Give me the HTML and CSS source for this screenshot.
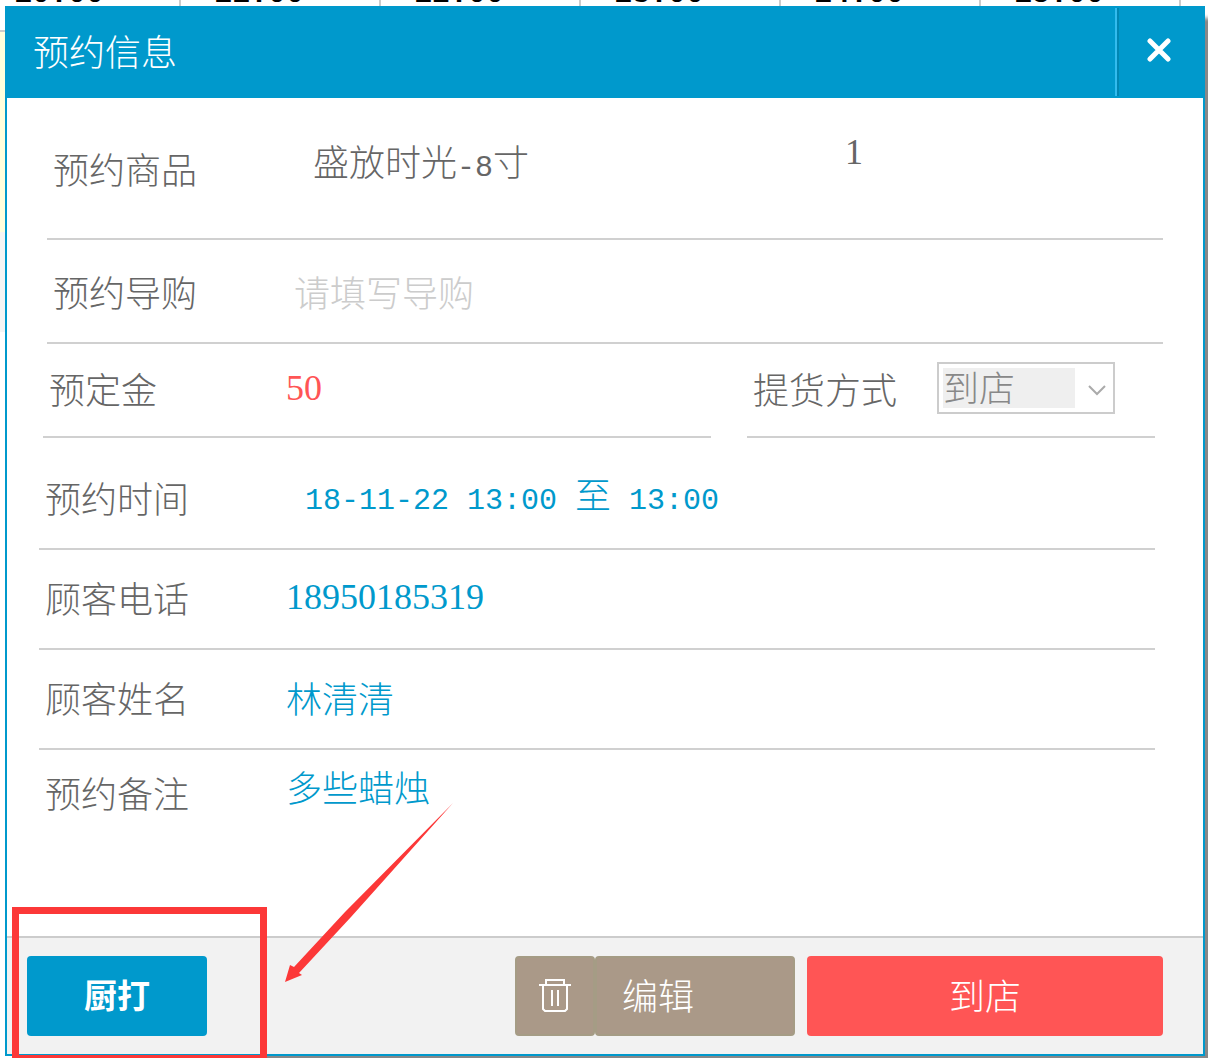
FILE: index.html
```
<!DOCTYPE html>
<html lang="zh-CN">
<head>
    <meta charset="UTF-8">
    <meta name="viewport" content="width=device-width, initial-scale=1.0">
    <title>预约信息</title>
    <link rel="stylesheet" href="styles.css">
</head>
<body>
    <!-- Schedule behind the dialog -->
    <div class="calendar">
        <div class="calendar-head">
            <span>10:00</span>
            <span>11:00</span>
            <span>12:00</span>
            <span>13:00</span>
            <span>14:00</span>
            <span>15:00</span>
        </div>
        <div class="calendar-slot busy"></div>
        <div class="calendar-slot"></div>
    </div>

    <div class="dialog" role="dialog" aria-labelledby="dialogTitle">
        <div class="dialog-header">
            <h1 id="dialogTitle">预约信息</h1>
            <button type="button" class="close-btn" aria-label="关闭">
                <svg width="24" height="24" viewBox="0 0 24 24">
                    <path d="M3 3L21 21M21 3L3 21" fill="none" stroke="#fff" stroke-width="5" stroke-linecap="round"/>
                </svg>
            </button>
        </div>

        <form>
            <div class="section-top">
                <div class="row row-goods">
                    <span class="label">预约商品</span>
                    <span class="goods-name">盛放时光<span class="mono">-8</span>寸</span>
                    <span class="goods-count num">1</span>
                </div>
                <div class="row row-guide">
                    <label class="label" for="guide">预约导购</label>
                    <input type="text" id="guide" placeholder="请填写导购">
                </div>
            </div>

            <div class="section-deposit">
                <div class="row row-deposit">
                    <label class="label" for="deposit">预定金</label>
                    <input type="text" id="deposit" class="num red" value="50">
                </div>
                <div class="row row-pickup">
                    <label class="label" for="pickup">提货方式</label>
                    <div class="select-box">
                        <select id="pickup">
                            <option>到店</option>
                        </select>
                        <svg class="arrow" width="18" height="12" viewBox="0 0 18 12">
                            <path d="M1 2L9 10L17 2" fill="none" stroke="#aaa" stroke-width="2"/>
                        </svg>
                    </div>
                </div>
            </div>

            <div class="section-customer">
                <div class="row row-time">
                    <span class="label">预约时间</span>
                    <span class="time"><span class="mono">18-11-22 13:00 </span>至<span class="mono"> 13:00</span></span>
                </div>
                <div class="row">
                    <label class="label" for="phone">顾客电话</label>
                    <input type="text" id="phone" class="num" value="18950185319">
                </div>
                <div class="row">
                    <label class="label" for="customer">顾客姓名</label>
                    <input type="text" id="customer" value="林清清">
                </div>
                <div class="row row-remark">
                    <label class="label" for="remark">预约备注</label>
                    <textarea id="remark">多些蜡烛</textarea>
                </div>
            </div>
        </form>

        <div class="dialog-footer">
            <button type="button" class="btn btn-print">厨打</button>
            <div class="btn-group">
                <button type="button" class="btn btn-delete" aria-label="删除">
                    <svg width="32" height="34" viewBox="0 0 32 34">
                        <path d="M0 6H32M7 6V1H25V6M4 6V30L6 32H26L28 30V6M13 11V27M19 11V27" fill="none" stroke="#fff" stroke-width="2"/>
                    </svg>
                </button>
                <button type="button" class="btn btn-edit">编辑</button>
            </div>
            <button type="button" class="btn btn-arrive">到店</button>

            <div class="mark-box"></div>
            <svg class="mark-arrow" width="168" height="180" viewBox="0 0 168 180">
                <path d="M0 179L5 162L9 164L60 109L168 0L66 114L14 170L17 172Z" fill="#fc3838"/>
            </svg>
        </div>
    </div>
</body>
</html>
```
FILE: styles.css
```
* {
    box-sizing: border-box;
}
body {
    margin: 0;
    min-height: 100vh;
    overflow: hidden;
    position: relative;
    background: #fff;
    color: #666;
    font-family: "Noto Sans CJK SC", sans-serif;
    font-size: 36px;
    font-weight: 300;
    line-height: 36px;
}
button, input, select, textarea {
    margin: 0;
    padding: 0;
    border: none;
    border-radius: 0;
    background: none;
    color: inherit;
    font: inherit;
}
.num {
    font-family: "Liberation Serif", serif;
}
.mono {
    font-family: "Liberation Mono", monospace;
    font-size: 30px;
    white-space: pre;
}

/* schedule */
.calendar {
    margin-top: -24px;
}
.calendar-head {
    display: flex;
    height: 56px;
    margin-left: -19px;
    border-bottom: 2px solid #ccc;
    color: #000;
    font-family: "Liberation Mono", monospace;
    font-size: 30px;
    font-weight: bold;
}
.calendar-head span {
    flex: 0 0 200px;
    padding-left: 33px;
    border-right: 2px solid #ccc;
}
.calendar-slot {
    height: 100px;
    background: #f5f5f5;
}
.calendar-slot.busy {
    height: 200px;
    background: #ffffdd;
}

/* dialog */
.dialog {
    position: absolute;
    top: 6px;
    left: 5px;
    right: 3px;
    border: 2px solid #0099cc;
    background: #fff;
    box-shadow: 12px 12px 4px #888;
}
.dialog-header {
    display: flex;
    justify-content: space-between;
    height: 90px;
    padding-left: 26px;
    background: #0099cc;
    color: #fff;
}
.dialog-header h1 {
    margin: 0;
    font-size: 36px;
    font-weight: 300;
    line-height: 84px;
}
.close-btn {
    display: flex;
    align-items: center;
    justify-content: center;
    width: 88px;
    height: 88px;
    padding: 0 2px 4px 0;
    border-left: 2px solid #33bbee;
    box-shadow: inset 2px 0 #0086b3;
}

/* form rows */
.section-top {
    padding: 0 40px;
}
.section-deposit {
    display: flex;
    gap: 36px;
    padding: 0 48px 0 36px;
}
.section-customer {
    padding: 0 48px 0 32px;
}
.row {
    display: flex;
    align-items: center;
    height: 100px;
    padding: 0 0 4px 6px;
    border-bottom: 2px solid #d0d0d0;
}
.label {
    flex: 0 0 240px;
}
.row input,
.row textarea {
    flex: 1;
    min-width: 0;
    height: 48px;
    padding: 0 1px;
    color: #0099cc;
    outline: none;
}
.row input::placeholder {
    color: #ccc;
    opacity: 1;
}
.row input.red {
    color: #ff5555;
}
.row-goods {
    align-items: flex-start;
    height: 142px;
    padding-top: 34px;
}
.row-goods .label {
    line-height: 72px;
}
.goods-name {
    flex: 1;
    padding-left: 20px;
    line-height: 56px;
}
.goods-count {
    width: 318px;
    line-height: 40px;
}
.row-guide {
    height: 104px;
    padding-top: 4px;
}
.row-deposit {
    flex: 1;
    min-width: 0;
    height: 94px;
}
.row-deposit .label {
    flex-basis: 236px;
}
.row-pickup {
    flex: 0 0 408px;
    height: 94px;
}
.row-pickup .label {
    flex-basis: 184px;
}
.select-box {
    position: relative;
    width: 178px;
    height: 52px;
    padding: 4px;
    border: 2px solid #ccc;
}
.select-box select {
    display: block;
    appearance: none;
    width: 132px;
    height: 40px;
    padding-bottom: 4px;
    background: #efefef;
    color: #888;
}
.select-box .arrow {
    position: absolute;
    top: 20px;
    right: 7px;
    pointer-events: none;
}
.row-time {
    height: 112px;
    padding-top: 12px;
}
.time {
    padding-left: 20px;
    color: #0099cc;
}
.row-remark {
    align-items: flex-start;
    height: 186px;
    padding-top: 18px;
    border-bottom: none;
}
.row-remark .label {
    line-height: 48px;
}
.row-remark textarea {
    height: 120px;
    resize: none;
}

/* footer */
.dialog-footer {
    position: relative;
    display: flex;
    gap: 12px;
    padding: 18px 40px 18px 20px;
    border-top: 2px solid #ccc;
    background: #f2f2f2;
}
.btn {
    height: 80px;
    padding-bottom: 4px;
    border-radius: 4px;
    color: #fff;
    cursor: pointer;
}
.btn-print {
    width: 180px;
    margin-right: auto;
    background: #0099cc;
    font-size: 33px;
    font-weight: bold;
}
.btn-group {
    display: flex;
}
.btn-delete,
.btn-edit {
    border: 2px solid #a59c85;
    background: #aa9988;
}
.btn-delete {
    display: flex;
    align-items: center;
    justify-content: center;
    width: 80px;
    padding-bottom: 0;
}
.btn-edit {
    width: 200px;
    padding-left: 25px;
    text-align: left;
}
.btn-arrive {
    width: 356px;
    background: #ff5555;
}

/* callout round the print button */
.mark-box {
    position: absolute;
    top: -31px;
    left: 5px;
    width: 255px;
    height: 155px;
    border: 7px solid #fc3838;
    pointer-events: none;
}
.mark-arrow {
    position: absolute;
    top: -135px;
    left: 278px;
    pointer-events: none;
}
```
